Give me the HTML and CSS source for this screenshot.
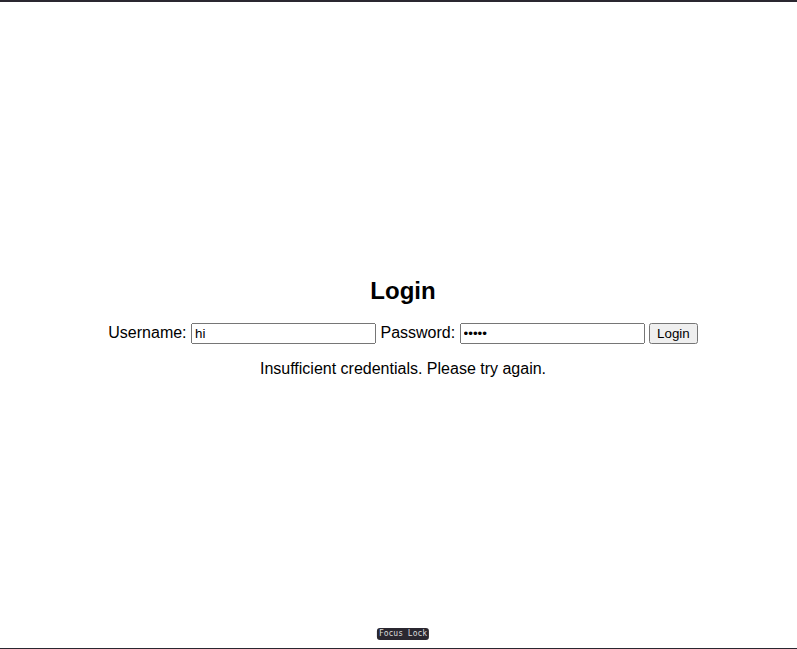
FILE: index.html
```html
<!DOCTYPE html>
<html>
<head>
<meta charset="utf-8">
<link rel="stylesheet" href="styles.css">
</head>
<body>
<main class="page">
  <h2 class="title">Login</h2>
  <form class="login-form">
    <label>Username: <input type="text" value="hi"></label>
    <label>Password: <input type="password" value="hello"></label>
    <button type="button">Login</button>
  </form>
  <p class="message">Insufficient credentials. Please try again.</p>
</main>
<div class="badge">Focus Lock</div>
</body>
</html>
```
FILE: styles.css
```css
html, body {
  margin: 0;
  height: 100%;
}
body {
  font-family: "Liberation Sans", Arial, sans-serif;
  font-size: 16px;
  color: #000;
  background: #fff;
  border-top: 2px solid #2a2730;
  border-bottom: 1px solid #2a2730;
  box-sizing: border-box;
}
.page {
  height: 100%;
  box-sizing: border-box;
  padding: 4px 0 0 9px;
  display: flex;
  flex-direction: column;
  align-items: center;
  justify-content: center;
}
.title {
  font-size: 24px;
  font-weight: bold;
  margin: 0 0 18px;
}
.login-form {
  margin: 0;
}
.message {
  margin: 16px 0 0;
}
.badge {
  position: fixed;
  left: calc(50% + 4.5px);
  bottom: 9px;
  transform: translateX(-50%);
  background: #2a2730;
  color: #ddd;
  font-family: "DejaVu Sans Mono", monospace;
  font-size: 8px;
  line-height: 12px;
  padding: 0 2px;
  border-radius: 3px;
}
```
